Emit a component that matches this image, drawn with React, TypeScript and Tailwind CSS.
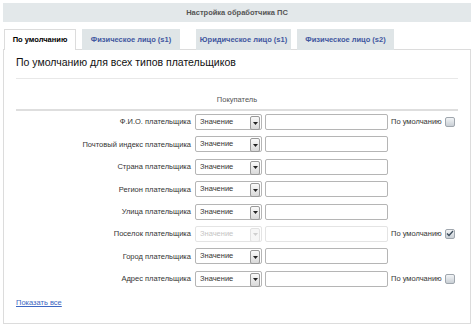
import React from 'react';

const rows = [
  { label: 'Ф.И.О. плательщика', def: 'off' },
  { label: 'Почтовый индекс плательщика' },
  { label: 'Страна плательщика' },
  { label: 'Регион плательщика' },
  { label: 'Улица плательщика' },
  { label: 'Поселок плательщика', def: 'on', disabled: true },
  { label: 'Город плательщика' },
  { label: 'Адрес плательщика', def: 'off' },
];

function Arrow({ disabled }: { disabled?: boolean }) {
  return (
    <div
      className={`w-[10px] h-[14px] mt-px mr-px flex items-center justify-center rounded-[2px] border ${
        disabled ? 'border-[#e2e2e2] bg-[#f6f6f6]' : 'border-[#9a9a9a] bg-gradient-to-b from-[#fafafa] to-[#d9d9d9]'
      }`}
    >
      <svg width="5" height="3" viewBox="0 0 5 3">
        <path d="M0 0h5L2.5 3z" fill={disabled ? '#cfcfcf' : '#222'} />
      </svg>
    </div>
  );
}

function Checkbox({ checked }: { checked?: boolean }) {
  return (
    <div className="w-[10px] h-[10px] rounded-[2px] border border-[#9fa6ad] bg-gradient-to-b from-[#f2f4f6] to-[#c9cfd5] flex items-center justify-center">
      {checked && (
        <svg width="8" height="7" viewBox="0 0 8 7">
          <path d="M1 3.5l2 2L7 1" stroke="#3a4a5a" strokeWidth="1.3" fill="none" />
        </svg>
      )}
    </div>
  );
}

export default function App() {
  return (
    <div className="w-[474px] h-[329px] bg-white pt-[3px] px-[3px] font-['Liberation_Sans',Arial,sans-serif]">
      <div className="h-[19px] bg-[#e3e8ea] flex items-center justify-center text-[7.5px] font-bold text-[#555]">
        Настройка обработчика ПС
      </div>
      <div className="flex items-end h-[28px] pl-px -mb-px relative z-10 text-[7.5px] font-bold">
        <div className="h-[21px] w-[72px] bg-white border border-b-0 border-[#dcdcdc] flex items-center justify-center text-black">
          По умолчанию
        </div>
        <div className="ml-[6px] h-[21px] w-[98px] bg-[#dfe5e7] flex items-center justify-center text-[#3f57a0]">
          Физическое лицо (s1)
        </div>
        <div className="ml-[16px] h-[21px] w-[95px] bg-[#dfe5e7] flex items-center justify-center text-[#3f57a0]">
          Юридическое лицо (s1)
        </div>
        <div className="ml-[6px] h-[21px] w-[97px] bg-[#dfe5e7] flex items-center justify-center text-[#3f57a0]">
          Физическое лицо (s2)
        </div>
      </div>
      <div className="w-[468px] h-[275px] border border-[#dcdcdc] px-3 flex flex-col">
        <div className="h-[29px] border-b border-[#e8e8e8] pt-[6px] text-[10.5px] text-[#111] leading-[13px]">
          По умолчанию для всех типов плательщиков
        </div>
        <div className="mt-[16px] text-center text-[7.5px] text-[#555] leading-[10px]">Покупатель</div>
        <div className="mt-[4px] h-[2px] bg-[#dedede]" />
        <div className="mt-[3px] flex flex-col gap-[6.4px]">
          {rows.map((r) => (
            <div key={r.label} className="flex items-center h-4 text-[7.5px]">
              <div className="w-[179px] text-right pr-[4px] text-[#333]">{r.label}</div>
              <div
                className={`w-[67px] h-4 rounded-[2px] border flex items-start justify-between bg-white ${
                  r.disabled ? 'border-[#e4e4e4] text-[#c4c4c4]' : 'border-[#b5b5b5] text-[#333]'
                }`}
              >
                <span className="pl-[4px] leading-[14px]">Значение</span>
                <Arrow disabled={r.disabled} />
              </div>
              <div
                className={`ml-[3px] w-[123px] h-4 rounded-[2px] border bg-white ${
                  r.disabled ? 'border-[#e4e4e4]' : 'border-[#b5b5b5]'
                }`}
              />
              {r.def && (
                <div className="ml-[3px] flex items-center gap-[3px] text-[#333]">
                  <span>По умолчанию</span>
                  <Checkbox checked={r.def === 'on'} />
                </div>
              )}
            </div>
          ))}
        </div>
        <div className="mt-[10px] text-[7.5px] text-[#3d67c2] underline">Показать все</div>
      </div>
    </div>
  );
}
